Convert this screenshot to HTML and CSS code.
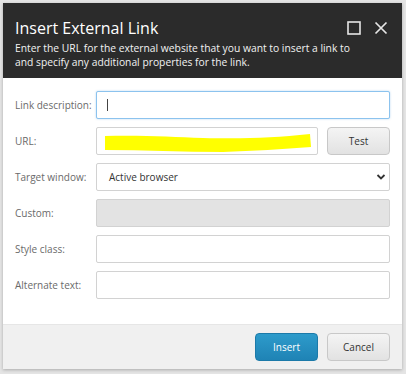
FILE: index.html
```html
<!DOCTYPE html>
<html>
<head>
<meta charset="utf-8">
<link rel="stylesheet" href="styles.css">
</head>
<body>
<div class="dialog">
  <div class="header">
    <div class="title-row">
      <div class="title">Insert External Link</div>
      <div class="controls">
        <svg class="ctl" width="14" height="14" viewBox="0 0 14 14"><rect x="1" y="1" width="12" height="12" fill="none" stroke="#e6e6e6" stroke-width="1.6"/></svg>
        <svg class="ctl" width="14" height="14" viewBox="0 0 14 14"><path d="M1.5 1.5 L12.5 12.5 M12.5 1.5 L1.5 12.5" stroke="#e6e6e6" stroke-width="1.7" fill="none"/></svg>
      </div>
    </div>
    <div class="desc">Enter the URL for the external website that you want to insert a link to and specify any additional properties for the link.</div>
  </div>
  <div class="body">
    <label class="lbl">Link description:</label>
    <div class="field focus"><span class="caret"></span></div>

    <label class="lbl">URL:</label>
    <div class="url-row">
      <div class="field url">
        <svg class="scribble" width="210" height="20" viewBox="0 0 210 20"><path d="M2 3 C40 2 70 4 100 5 C140 6 170 5 207 1 L208 14 C180 16 150 18 120 19 C80 19 40 17 2 17 Z" fill="#ffff00"/></svg>
      </div>
      <button class="btn">Test</button>
    </div>

    <label class="lbl">Target window:</label>
    <div class="field select"><span>Active browser</span>
      <svg width="10" height="8" viewBox="0 0 10 8"><path d="M1.5 2 L5 5.5 L8.5 2" stroke="#333" stroke-width="1.8" fill="none"/></svg>
    </div>

    <label class="lbl">Custom:</label>
    <div class="field disabled"></div>

    <label class="lbl">Style class:</label>
    <div class="field"></div>

    <label class="lbl">Alternate text:</label>
    <div class="field"></div>
  </div>
  <div class="footer">
    <button class="btn primary">Insert</button>
    <button class="btn">Cancel</button>
  </div>
</div>
</body>
</html>
```
FILE: styles.css
```css
html, body {
  margin: 0;
  padding: 0;
}
body {
  background: #e4e4e4;
  font-family: "Open Sans", "DejaVu Sans", sans-serif;
  width: 406px;
  height: 374px;
  overflow: hidden;
}
.dialog {
  margin: 3px 0 0 3px;
  width: 399px;
  background: #fff;
  box-shadow: 0 1px 3px rgba(0,0,0,0.25);
}
.header {
  background: #2b2b2b;
  color: #fff;
  padding: 14px 12px 10px 12px;
  height: 51px;
}
.title-row {
  display: flex;
  align-items: center;
  justify-content: space-between;
}
.title {
  font-size: 16px;
  line-height: 22px;
}
.controls {
  display: flex;
  gap: 13px;
  margin-right: 2px;
}
.desc {
  font-size: 10.3px;
  line-height: 14px;
  margin-top: 2px;
  color: #f2f2f2;
  max-width: 340px;
}
.body {
  display: grid;
  grid-template-columns: 81px 1fr;
  row-gap: 8px;
  padding: 13px 12px 25px 12px;
  align-items: center;
}
.lbl {
  font-size: 10px;
  color: #6a6a6a;
}
.field {
  height: 26px;
  border: 1px solid #d2d2d2;
  border-radius: 2px;
  background: #fff;
  box-sizing: content-box;
  display: flex;
  align-items: center;
}
.field.focus {
  border-color: #8cc3ee;
  box-shadow: 0 0 2px rgba(100,170,230,0.5);
}
.caret {
  display: block;
  width: 1px;
  height: 12px;
  background: #444;
  margin-left: 10px;
}
.url-row {
  display: flex;
  gap: 9px;
}
.field.url {
  flex: 1;
}
.scribble {
  margin-left: 6px;
  margin-top: 3px;
}
.field.select {
  justify-content: space-between;
  padding: 0 3px 0 12px;
  font-size: 10px;
  color: #333;
}
.field.disabled {
  background: #e3e3e3;
}
.btn {
  width: 63px;
  height: 28px;
  border: 1px solid #c8c8c8;
  border-radius: 4px;
  background: linear-gradient(#f4f4f4, #e2e2e2);
  font-family: "Open Sans", "DejaVu Sans", sans-serif;
  font-size: 10px;
  color: #333;
  padding: 0;
}
.footer {
  background: #f0f0f0;
  height: 44px;
  display: flex;
  justify-content: flex-end;
  align-items: center;
  gap: 9px;
  padding: 0 12px;
  border-top: 1px solid #e6e6e6;
}
.btn.primary {
  background: linear-gradient(#2d9bcb, #1f83b5);
  border-color: #1c7aa9;
  color: #fff;
}
```
